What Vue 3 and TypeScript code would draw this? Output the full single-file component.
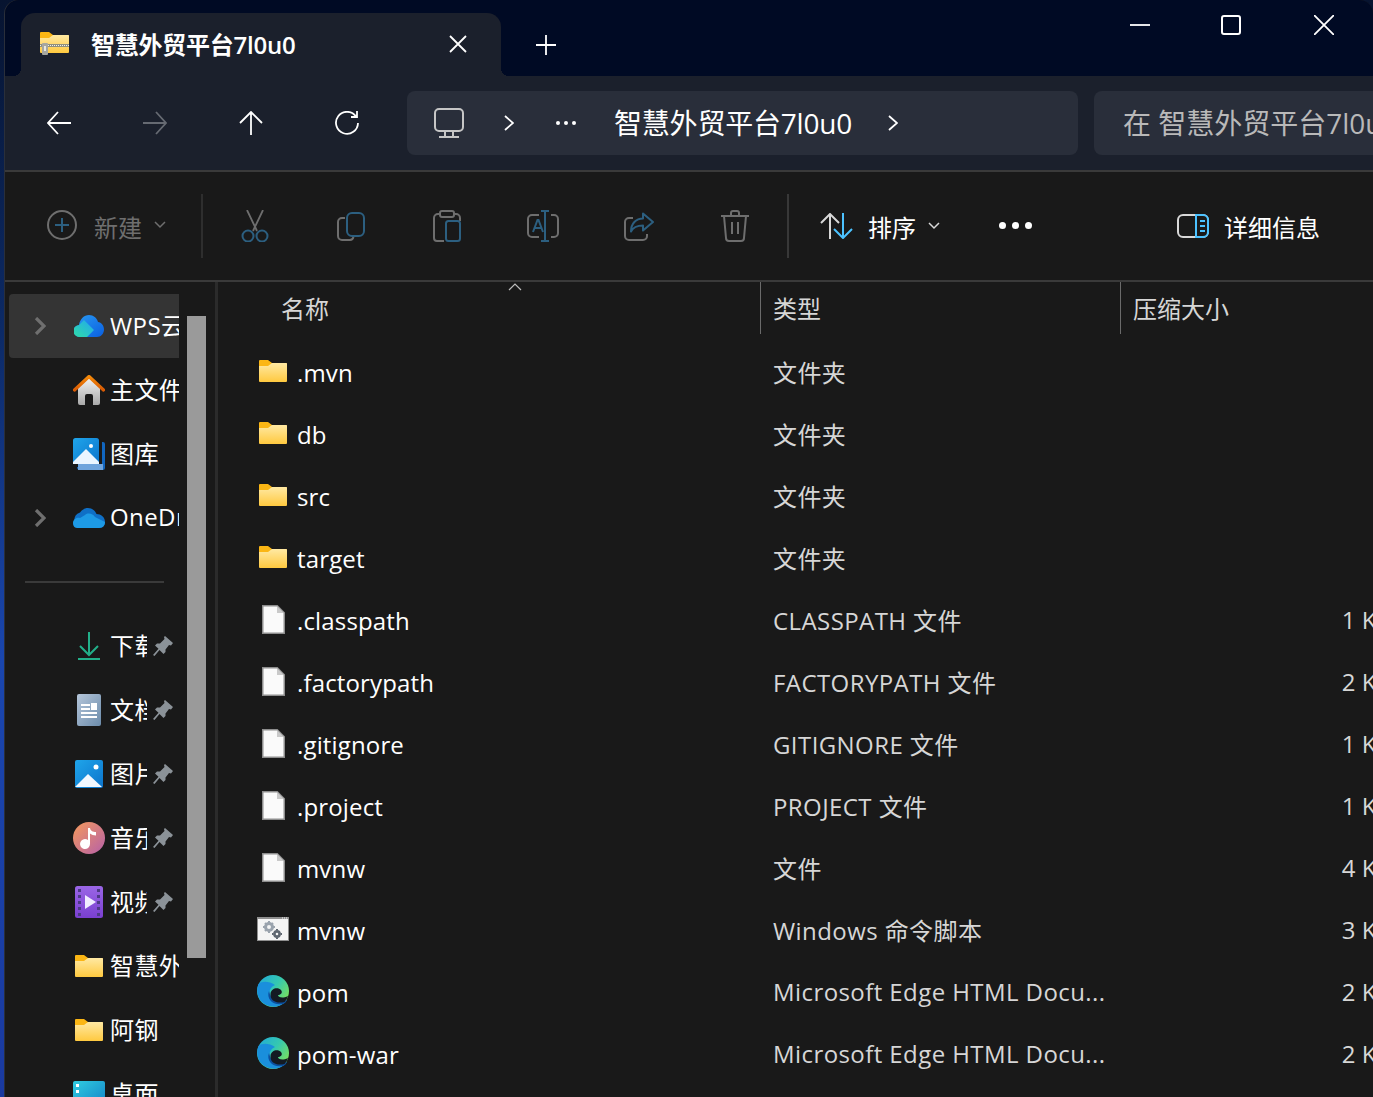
<script setup lang="ts">
interface NavItem { label: string; icon: string; w: number; h: number; chevron?: boolean; pinned?: boolean; selected?: boolean }
interface FileRow { name: string; icon: string; w: number; h: number; type: string; size?: string }

const navTop: NavItem[] = [
  { label: 'WPS云盘', icon: 'wps', w: 30, h: 22, chevron: true, selected: true },
  { label: '主文件夹', icon: 'home', w: 32, h: 30 },
  { label: '图库', icon: 'gallery', w: 32, h: 32 },
  { label: 'OneDrive', icon: 'onedrive', w: 32, h: 20, chevron: true },
]
const navBottom: NavItem[] = [
  { label: '下载', icon: 'download', w: 22, h: 28, pinned: true },
  { label: '文档', icon: 'doc', w: 24, h: 32, pinned: true },
  { label: '图片', icon: 'picture', w: 28, h: 28, pinned: true },
  { label: '音乐', icon: 'music', w: 32, h: 32, pinned: true },
  { label: '视频', icon: 'video', w: 28, h: 32, pinned: true },
  { label: '智慧外贸平台7l0u0', icon: 'folder', w: 28, h: 22 },
  { label: '阿钢', icon: 'folder', w: 28, h: 22 },
  { label: '桌面', icon: 'desktop', w: 32, h: 26 },
]
const folder = { icon: 'folder', w: 28, h: 22, type: '文件夹' }
const file = { icon: 'file', w: 23, h: 29 }
const edge = { icon: 'edge', w: 32, h: 32, type: 'Microsoft Edge HTML Docu...', size: '2 KB' }
const rows: FileRow[] = [
  { name: '.mvn', ...folder },
  { name: 'db', ...folder },
  { name: 'src', ...folder },
  { name: 'target', ...folder },
  { name: '.classpath', ...file, type: 'CLASSPATH 文件', size: '1 KB' },
  { name: '.factorypath', ...file, type: 'FACTORYPATH 文件', size: '2 KB' },
  { name: '.gitignore', ...file, type: 'GITIGNORE 文件', size: '1 KB' },
  { name: '.project', ...file, type: 'PROJECT 文件', size: '1 KB' },
  { name: 'mvnw', ...file, type: '文件', size: '4 KB' },
  { name: 'mvnw', icon: 'script', w: 32, h: 24, type: 'Windows 命令脚本', size: '3 KB' },
  { name: 'pom', ...edge },
  { name: 'pom-war', ...edge },
]
const cmdIcons = [
  { id: 'cut', w: 28, h: 32 },
  { id: 'copy', w: 28, h: 29 },
  { id: 'paste', w: 28, h: 32 },
  { id: 'rename', w: 32, h: 32 },
  { id: 'share', w: 30, h: 29 },
  { id: 'trash', w: 30, h: 32 },
]
</script>

<template>
  <div class="screen">
    <svg class="defs" width="0" height="0" aria-hidden="true">
      <defs>
        <linearGradient id="gFolder" x1="0" y1="0" x2="0" y2="1"><stop offset="0" stop-color="#ffe9a3" /><stop offset="1" stop-color="#ffc93f" /></linearGradient>
        <linearGradient id="gWpsA" x1="0" y1="1" x2="1" y2="0"><stop offset="0" stop-color="#2fdca6" /><stop offset="1" stop-color="#22a7f0" /></linearGradient>
        <linearGradient id="gWpsB" x1="0" y1="0" x2="1" y2="1"><stop offset="0" stop-color="#2a9bf2" /><stop offset="1" stop-color="#0a5fe0" /></linearGradient>
        <linearGradient id="gRoof" x1="0" y1="0" x2="0" y2="1"><stop offset="0" stop-color="#f58a0a" /><stop offset="1" stop-color="#d85a04" /></linearGradient>
        <linearGradient id="gHouse" x1="0" y1="0" x2="0" y2="1"><stop offset="0" stop-color="#f2f2f2" /><stop offset="1" stop-color="#a9a9a9" /></linearGradient>
        <linearGradient id="gBlue" x1="0" y1="0" x2="1" y2="1"><stop offset="0" stop-color="#1fa5ea" /><stop offset="1" stop-color="#0c74cc" /></linearGradient>
        <linearGradient id="gDoc" x1="0" y1="0" x2="1" y2="1"><stop offset="0" stop-color="#b5c6da" /><stop offset="1" stop-color="#6c8cab" /></linearGradient>
        <linearGradient id="gMusic" x1="0" y1="0" x2="1" y2="1"><stop offset="0" stop-color="#f59a5c" /><stop offset="1" stop-color="#b660a8" /></linearGradient>
        <linearGradient id="gVideo" x1="0" y1="0" x2="0" y2="1"><stop offset="0" stop-color="#9a66e6" /><stop offset="1" stop-color="#7a3fd0" /></linearGradient>
        <linearGradient id="gEdge" x1="0" y1="0" x2="1" y2=".7"><stop offset="0" stop-color="#1fa8dc" /><stop offset=".55" stop-color="#35c8b0" /><stop offset="1" stop-color="#7be25a" /></linearGradient>
        <linearGradient id="gDesk" x1="0" y1="0" x2="1" y2="1"><stop offset="0" stop-color="#30cde0" /><stop offset="1" stop-color="#1382c8" /></linearGradient>
        <symbol id="folder" viewBox="0 0 28 22">
          <path d="M1 0h8l4 3h14a1 1 0 0 1 1 1v4H0V1a1 1 0 0 1 1-1z" fill="#fbb614" />
          <path d="M0 6h9l4-3h14a1 1 0 0 1 1 1v17a1 1 0 0 1-1 1H1a1 1 0 0 1-1-1z" fill="url(#gFolder)" />
        </symbol>
        <symbol id="zip" viewBox="0 0 29 23">
          <path d="M1 0h8l4 3h15a1 1 0 0 1 1 1v4H0V1a1 1 0 0 1 1-1z" fill="#fbb614" />
          <path d="M0 6h9l4-3h15a1 1 0 0 1 1 1v16a1 1 0 0 1-1 1H1a1 1 0 0 1-1-1z" fill="url(#gFolder)" />
          <rect x="0" y="12" width="29" height="3" fill="#8f8f80" />
          <path d="M0 13.5h29" stroke="#f3f3e8" stroke-width="1" stroke-dasharray="1 1" />
          <rect x="2" y="11" width="6" height="12" rx="1" fill="#a7a7a0" />
          <rect x="4" y="14" width="2" height="5" fill="#e8e8e0" />
        </symbol>
        <symbol id="file" viewBox="0 0 23 29">
          <path d="M.75.75h14.5l7 7v20.5H.75z" fill="#fafafa" stroke="#8d8d8d" stroke-width="1.5" />
          <path d="M15 1v7h7z" fill="#c9c9c9" />
        </symbol>
        <symbol id="script" viewBox="0 0 32 24">
          <rect x=".5" y=".5" width="31" height="23" fill="#f4f4f4" stroke="#8f8f8f" />
          <rect x="0" y="0" width="32" height="2" fill="#8f8f8f" />
          <path d="M25 1h6" stroke="#f4f4f4" stroke-width="1" stroke-dasharray="1 1" />
          <circle cx="12" cy="10" r="3.500" fill="none" stroke="#9aa3ad" stroke-width="3" />
          <circle cx="20" cy="17" r="2.600" fill="none" stroke="#5f6670" stroke-width="2.600" />
          <path d="M12 4v2M12 14v2M6 10h2M16 10h2M8 6l1.500 1.500M16 6l-1.500 1.500M8 14l1.500-1.500" stroke="#9aa3ad" stroke-width="2" />
          <path d="M20 12v1.500M20 20.500V22M15 17h1.500M23.500 17H25" stroke="#5f6670" stroke-width="2" />
        </symbol>
        <symbol id="edge" viewBox="0 0 32 32">
          <circle cx="16" cy="16" r="16" fill="url(#gEdge)" />
          <path d="M1.500 9C-2 18 2 28 12 31c6 2 14 0 18-6-6 3-13 2-16-3-3-5-1-10 4-12C12 6 5 6 1.500 9z" fill="#1a8fdc" />
          <path d="M12 16c-3 8 4 15 14 13 2-1 3-2 4-4-6 3-13 2-16-3-1-2-1.500-4-2-6z" fill="#0c4f9e" />
          <path d="M13.500 19c.5-6 7.500-7 10.500-4 2 2.500 0 5-3 5 0 2 4 4 10 1-1 3-2 4.500-3.500 6-7.500 2-14.500-1-14-8z" fill="#141a22" />
        </symbol>
        <symbol id="wps" viewBox="0 0 30 22">
          <path d="M12 22H6a6 6 0 0 1-1-12C6 4 10 0 15 0c4.500 0 8 3 9 7 3.500.5 6 3.500 6 7.500 0 4-3 7.500-7 7.500z" fill="url(#gWpsB)" />
          <path d="M6 22a6 6 0 0 1-1-12l5-5 10 10-7 7z" fill="url(#gWpsA)" />
        </symbol>
        <symbol id="home" viewBox="0 0 32 30">
          <path d="M5 13 16 3l11 10v15a2 2 0 0 1-2 2h-5v-9a2 2 0 0 0-2-2h-4a2 2 0 0 0-2 2v9H7a2 2 0 0 1-2-2z" fill="url(#gHouse)" />
          <path d="M1.500 15 16 1.500 30.500 15" fill="none" stroke="url(#gRoof)" stroke-width="3.200" stroke-linecap="round" stroke-linejoin="round" />
        </symbol>
        <symbol id="gallery" viewBox="0 0 32 32">
          <path d="M29 4h1a2 2 0 0 1 2 2v24a2 2 0 0 1-2 2H7a3 3 0 0 1-3-3h25z" fill="#1166c0" />
          <rect x="5" y="26" width="25" height="6" fill="#6fa4dc" />
          <rect x="0" y="0" width="26" height="26" rx="2.500" fill="url(#gBlue)" />
          <circle cx="18" cy="8" r="2" fill="#fff" />
          <path d="M0 24 13 11l13 13v2H0z" fill="#eaf5ff" />
        </symbol>
        <symbol id="onedrive" viewBox="0 0 32 20">
          <path d="M8 20a8 8 0 0 1-1-15.500C9 1.500 12 0 15 0c4 0 7 2.500 8.500 6 4.500 0 8.500 3 8.500 8 0 3-2 6-6 6z" fill="#0f6fc6" />
          <path d="M12 7C15 4.500 20 5.500 22 9l10 5c0 3-2 6-6 6H4C1 20 0 17 0 15c0-3 3-6 7-5z" fill="#1d9ae6" />
        </symbol>
        <symbol id="download" viewBox="0 0 22 28">
          <path d="M11 0v22M2 14l9 9 9-9M0 27h22" fill="none" stroke="#22b08a" stroke-width="2" />
        </symbol>
        <symbol id="doc" viewBox="0 0 24 32">
          <rect width="24" height="32" rx="2" fill="url(#gDoc)" />
          <path d="M4 11h9M4 15h9M4 19h16M4 23h16" stroke="#fff" stroke-width="2" />
          <rect x="14" y="9" width="6" height="7" fill="#fff" />
        </symbol>
        <symbol id="picture" viewBox="0 0 28 28">
          <rect width="28" height="28" rx="2" fill="url(#gBlue)" />
          <circle cx="21" cy="7" r="2.500" fill="#fff" />
          <path d="M0 27 13 14l14 13z" fill="#f2f8ff" />
        </symbol>
        <symbol id="music" viewBox="0 0 32 32">
          <circle cx="16" cy="16" r="16" fill="url(#gMusic)" />
          <path d="M15 6h2c.5 3 3 4 6 4v3.500c-2.500 0-4.500-.8-6-2V22a5 5 0 1 1-2-4z" fill="#fff" />
        </symbol>
        <symbol id="video" viewBox="0 0 28 32">
          <rect width="28" height="32" rx="2.500" fill="url(#gVideo)" />
          <path d="M3 3h3v3H3zM3 9h3v3H3zM3 15h3v3H3zM3 21h3v3H3zM3 27h3v3H3zM22 3h3v3h-3zM22 9h3v3h-3zM22 15h3v3h-3zM22 21h3v3h-3zM22 27h3v3h-3z" fill="#4d3a86" />
          <path d="M10 9v14l11-7z" fill="#f0ecff" />
        </symbol>
        <symbol id="desktop" viewBox="0 0 32 26">
          <rect width="32" height="26" rx="2" fill="url(#gDesk)" />
          <rect x="3" y="3" width="3" height="3" fill="#fff" />
          <rect x="3" y="9" width="3" height="3" fill="#fff" />
        </symbol>
        <symbol id="pin" viewBox="0 0 20 20">
          <path d="M12 0l8 7-2 2.500-2-.5-3.500 4.500V16l-2 2-4-4-5 6L0 19l5.500-6.200L2 9.500l2-2h3L11.500 3 11 1z" fill="#8b9298" />
        </symbol>
        <symbol id="cut" viewBox="0 0 28 32">
          <path d="M6 0l10 21M22 0 12 21" fill="none" stroke="#6e6e6e" stroke-width="1.800" />
          <circle cx="7" cy="26" r="5.500" fill="none" stroke="#2c5f80" stroke-width="2" />
          <circle cx="21" cy="26" r="5.500" fill="none" stroke="#2c5f80" stroke-width="2" />
        </symbol>
        <symbol id="copy" viewBox="0 0 28 29">
          <path d="M8 6H5a4 4 0 0 0-4 4v14a4 4 0 0 0 4 4h8a4 4 0 0 0 3.500-3" fill="none" stroke="#6e6e6e" stroke-width="2" />
          <rect x="10" y="1" width="17" height="23" rx="5" fill="none" stroke="#2c5f80" stroke-width="2" />
        </symbol>
        <symbol id="paste" viewBox="0 0 28 32">
          <path d="M7 4H5a4 4 0 0 0-4 4v20a3 3 0 0 0 3 3h7M21 4h2a4 4 0 0 1 4 4v3" fill="none" stroke="#6e6e6e" stroke-width="2" />
          <rect x="7" y="1" width="14" height="6" rx="2" fill="none" stroke="#6e6e6e" stroke-width="2" />
          <rect x="13" y="11" width="14" height="20" rx="2.500" fill="none" stroke="#2c5f80" stroke-width="2" />
        </symbol>
        <symbol id="rename" viewBox="0 0 32 32">
          <path d="M12 5H5a4 4 0 0 0-4 4v14a4 4 0 0 0 4 4h7M24 5h3a4 4 0 0 1 4 4v14a4 4 0 0 1-4 4h-3" fill="none" stroke="#6e6e6e" stroke-width="2" />
          <path d="M18 1v30M14 1h8M14 31h8M6 22l4.500-12h1l4.500 12M7.500 18h7" fill="none" stroke="#2c5f80" stroke-width="2" />
        </symbol>
        <symbol id="share" viewBox="0 0 30 29">
          <path d="M9 6H5a4 4 0 0 0-4 4v14a4 4 0 0 0 4 4h14a4 4 0 0 0 4-4v-2" fill="none" stroke="#6e6e6e" stroke-width="2" />
          <path d="M19 1.500 29 10 19 18.500v-5c-6 0-10 2-12 6 0-8 5-13 12-13z" fill="none" stroke="#2c5f80" stroke-width="2" stroke-linejoin="round" />
        </symbol>
        <symbol id="trash" viewBox="0 0 30 32">
          <path d="M1 6h28M11 5V3a2 2 0 0 1 2-2h4a2 2 0 0 1 2 2v2M4 6l2 22a3 3 0 0 0 3 3h12a3 3 0 0 0 3-3l2-22M12 12v12M18 12v12" fill="none" stroke="#6e6e6e" stroke-width="2" />
        </symbol>
      </defs>
    </svg>

    <div class="window">
      <header class="titlebar">
        <div class="tab">
          <svg class="tab-icon" width="29" height="23"><use href="#zip" /></svg>
          <span class="tab-title">智慧外贸平台7l0u0</span>
          <svg class="tab-close" width="20" height="20" viewBox="0 0 20 20"><path d="M2 2l16 16M18 2 2 18" stroke="#fff" stroke-width="1.800" /></svg>
        </div>
        <svg class="tab-add" width="20" height="20" viewBox="0 0 20 20"><path d="M10 0v20M0 10h20" stroke="#fff" stroke-width="1.800" /></svg>
        <div class="win-controls">
          <svg class="win-min" width="20" height="20" viewBox="0 0 20 20"><path d="M0 10h20" stroke="#fff" stroke-width="1.800" /></svg>
          <svg width="20" height="20" viewBox="0 0 20 20"><rect x="1" y="1" width="18" height="18" rx="2" fill="none" stroke="#fff" stroke-width="2" /></svg>
          <svg width="20" height="20" viewBox="0 0 20 20"><path d="M0 0l20 20M20 0 0 20" stroke="#fff" stroke-width="1.800" /></svg>
        </div>
      </header>

      <div class="navbar">
        <div class="nav-buttons">
          <svg width="24" height="24" viewBox="0 0 24 24"><path d="M24 12H1M11 1 1 12l10 11" fill="none" stroke="#fff" stroke-width="1.800" /></svg>
          <svg width="24" height="24" viewBox="0 0 24 24"><path d="M0 12h23M13 1l10 11-10 11" fill="none" stroke="#666a72" stroke-width="1.800" /></svg>
          <svg width="24" height="24" viewBox="0 0 24 24"><path d="M12 24V1M1 12 12 1l11 11" fill="none" stroke="#fff" stroke-width="1.800" /></svg>
          <svg width="24" height="24" viewBox="0 0 24 24"><path d="M21 5.500A11 11 0 1 0 23 12M22 0v6h-6" fill="none" stroke="#fff" stroke-width="1.800" /></svg>
        </div>
        <div class="address">
          <svg width="30" height="30" viewBox="0 0 30 30"><rect x="1" y="1" width="28" height="22" rx="4" fill="none" stroke="#c6c6c6" stroke-width="2" /><path d="M11 24v4M19 24v4M5 29h20" stroke="#c6c6c6" stroke-width="2" /></svg>
          <svg class="crumb-chev first" width="10" height="16" viewBox="0 0 10 16"><path d="M1 1l8 7-8 7" fill="none" stroke="#fff" stroke-width="1.800" /></svg>
          <span class="crumb-dots"><i></i><i></i><i></i></span>
          <span class="crumb-text">智慧外贸平台7l0u0</span>
          <svg class="crumb-chev last" width="10" height="16" viewBox="0 0 10 16"><path d="M1 1l8 7-8 7" fill="none" stroke="#fff" stroke-width="1.800" /></svg>
        </div>
        <div class="search"><span>在 智慧外贸平台7l0u0</span></div>
      </div>

      <div class="toolbar">
        <div class="tool-new">
          <svg width="30" height="30" viewBox="0 0 30 30"><circle cx="15" cy="15" r="14" fill="none" stroke="#6e6e6e" stroke-width="2" /><path d="M15 8v14M8 15h14" stroke="#2c5f80" stroke-width="2" /></svg>
          <span>新建</span>
          <svg width="12" height="8" viewBox="0 0 12 8"><path d="M1 1l5 5 5-5" fill="none" stroke="#6e6e6e" stroke-width="1.500" /></svg>
        </div>
        <i class="tool-sep"></i>
        <div class="tool-cmds">
          <span v-for="c in cmdIcons" :key="c.id" class="cmd"><svg :width="c.w" :height="c.h"><use :href="'#' + c.id" /></svg></span>
        </div>
        <i class="tool-sep second"></i>
        <div class="tool-sort">
          <svg width="33" height="26" viewBox="0 0 33 26"><path d="M10 26V1M1 10l9-9 9 9" fill="none" stroke="#d8d8d8" stroke-width="2" /><path d="M23 0v25M14 16l9 9 9-9" fill="none" stroke="#4cc2ff" stroke-width="2" /></svg>
          <span>排序</span>
          <svg width="12" height="8" viewBox="0 0 12 8"><path d="M1 1l5 5 5-5" fill="none" stroke="#d8d8d8" stroke-width="1.500" /></svg>
        </div>
        <span class="tool-more"><i></i><i></i><i></i></span>
        <div class="tool-details">
          <svg width="32" height="24" viewBox="0 0 32 24"><rect x="1" y="1" width="30" height="22" rx="5" fill="none" stroke="#d8d8d8" stroke-width="2" /><path d="M19 1h7a5 5 0 0 1 5 5v12a5 5 0 0 1-5 5h-7z" fill="#191919" stroke="#4cc2ff" stroke-width="2" /><path d="M23 7h5M23 12h5M23 17h5" stroke="#4cc2ff" stroke-width="2" /></svg>
          <span>详细信息</span>
        </div>
      </div>

      <div class="body">
        <aside class="sidebar">
          <div class="nav-col">
            <ul class="nav-list">
              <li v-for="n in navTop" :key="n.label" class="nav-item" :class="{ selected: n.selected }">
                <svg v-if="n.chevron" class="nav-chev" width="12" height="18" viewBox="0 0 12 18"><path d="M2 1l8 8-8 8" fill="none" stroke="#6f6f6f" stroke-width="3.200" /></svg>
                <span class="nav-icon"><svg :width="n.w" :height="n.h"><use :href="'#' + n.icon" /></svg></span>
                <span class="nav-label">{{ n.label }}</span>
              </li>
            </ul>
            <hr class="nav-rule" />
            <ul class="nav-list">
              <li v-for="n in navBottom" :key="n.label" class="nav-item">
                <span class="nav-icon"><svg :width="n.w" :height="n.h"><use :href="'#' + n.icon" /></svg></span>
                <span class="nav-label" :class="{ short: n.pinned }">{{ n.label }}</span>
                <svg v-if="n.pinned" class="nav-pin" width="20" height="20"><use href="#pin" /></svg>
              </li>
            </ul>
          </div>
          <div class="scroll-track"><div class="scroll-thumb"></div></div>
        </aside>

        <main class="files">
          <div class="file-head">
            <div class="col-name"><span>名称</span><svg class="sort-caret" width="14" height="8" viewBox="0 0 14 8"><path d="M1 7l6-6 6 6" fill="none" stroke="#bdbdbd" stroke-width="1.200" /></svg></div>
            <div class="col-type"><span>类型</span></div>
            <div class="col-size"><span>压缩大小</span></div>
          </div>
          <div v-for="(r, i) in rows" :key="i" class="file-row">
            <div class="cell-name">
              <span class="file-icon"><svg :width="r.w" :height="r.h"><use :href="'#' + r.icon" /></svg></span>
              <span class="file-label">{{ r.name }}</span>
            </div>
            <div class="cell-type">{{ r.type }}</div>
            <div class="cell-size">{{ r.size }}</div>
          </div>
        </main>
      </div>
    </div>
  </div>
</template>

<style>
html, body { margin: 0; background: #0d2c78; }
</style>

<style scoped>
.screen {
  width: 1373px; height: 1097px; overflow: hidden; position: relative;
  background: linear-gradient(180deg, #071430 0%, #0c2a66 30%, #1a46ae 60%, #1a3aa0 100%);
  font-family: "Open Sans", "Noto Sans CJK SC", sans-serif;
  font-size: 24px; color: #fff;
}
.defs { position: absolute; }
.window {
  margin-left: 5px; width: 1368px; height: 1097px;
  border-radius: 14px 14px 0 0; overflow: hidden;
  display: flex; flex-direction: column; background: #191919;
  box-shadow: -1px 0 0 #2a2f3a;
}
.titlebar {
  height: 76px; flex: none; background: #000a24;
  display: flex; align-items: flex-end; padding-left: 16px; box-sizing: border-box;
}
.tab {
  width: 480px; height: 63px; background: #1b202c; border-radius: 14px 14px 0 0;
  display: flex; align-items: center; position: relative; padding-left: 19px; box-sizing: border-box;
}
.tab::before, .tab::after {
  content: ""; position: absolute; bottom: 0; width: 8px; height: 8px;
}
.tab::before { left: -8px; background: radial-gradient(circle at 0 0, #000a24 8px, #1b202c 8px); }
.tab::after { right: -8px; background: radial-gradient(circle at 100% 0, #000a24 8px, #1b202c 8px); }
.tab-icon { flex: none; margin-top: -3px; }
.tab-title { margin-left: 22px; font-weight: 600; width: 357px; margin-top: -2px; letter-spacing: -.25px; white-space: nowrap; }
.tab-close { flex: none; margin-top: -2px; }
.tab-add { margin-left: 35px; margin-bottom: 21px; flex: none; }
.win-controls { margin-left: auto; align-self: flex-start; margin-top: 15px; display: flex; gap: 73px; padding-right: 39px; }
.win-min { margin-right: -2px; }
.navbar {
  height: 94px; flex: none; background: #1b202c; display: flex; align-items: center;
  box-sizing: border-box; padding: 0 0 0 42px;
}
.nav-buttons { display: flex; gap: 72px; width: 312px; margin-right: 48px; flex: none; }
.address {
  width: 671px; height: 64px; background: #292e3a; border-radius: 8px; flex: none;
  display: flex; align-items: center; padding-left: 27px; box-sizing: border-box;
  font-size: 28px; margin-right: 16px;
}
.crumb-chev.first { margin-left: 40px; }
.crumb-dots { display: flex; gap: 4px; margin-left: 42px; width: 22px; }
.crumb-dots i, .tool-more i { display: block; border-radius: 50%; background: #fff; }
.crumb-dots i { width: 4px; height: 4px; }
.crumb-text { margin-left: 36px; letter-spacing: -.2px; padding-bottom: 2px; }
.crumb-chev.last { margin-left: 36px; }
.search {
  width: 320px; height: 64px; background: #292e3a; border-radius: 8px; flex: none;
  display: flex; align-items: center; padding-left: 29px; box-sizing: border-box;
  font-size: 28px; color: #b9b9b9; white-space: nowrap; overflow: hidden;
}
.search span { padding-bottom: 2px; }
.toolbar {
  height: 112px; flex: none; box-sizing: border-box; background: #191919;
  border-top: 2px solid #3a3a3a; border-bottom: 2px solid #3a3a3a;
  display: flex; align-items: center; padding-left: 42px;
}
.tool-new { display: flex; align-items: center; color: #6e6e6e; width: 155px; margin-top: -2px; }
.tool-new span { margin-left: 17px; margin-right: 12px; margin-top: 3px; }
.tool-sep { display: block; width: 2px; height: 64px; background: #2e2e2e; flex: none; margin-left: -1px; }
.tool-sep.second { margin-left: 0; background: #383838; }
.tool-cmds { display: flex; width: 584px; padding-left: 36px; box-sizing: border-box; gap: 64px; }
.cmd { display: flex; justify-content: center; align-items: center; width: 32px; height: 32px; flex: none; }
.tool-sort { display: flex; align-items: center; margin-left: 31px; width: 179px; }
.tool-sort span { margin-left: 15px; margin-right: 12px; }
.tool-more { display: flex; gap: 6px; width: 146px; margin-top: -2px; }
.tool-more i { width: 7px; height: 7px; }
.tool-details { display: flex; align-items: center; margin-left: 32px; }
.tool-details span { margin-left: 15px; }
.body { flex: 1; display: flex; min-height: 0; }
.sidebar {
  width: 213px; box-sizing: border-box; flex: none; border-right: 3px solid #2b2b2b; display: flex; overflow: hidden;
}
.nav-col { width: 174px; padding: 12px 0 0 4px; flex: none; }
.nav-list { list-style: none; margin: 0; padding: 0; }
.nav-item {
  height: 64px; display: flex; align-items: center; position: relative; white-space: nowrap;
  width: 170px; padding-left: 64px; box-sizing: border-box; border-radius: 4px 0 0 4px;
}
.nav-item.selected { background: #343434; }
.nav-chev { position: absolute; left: 25px; top: 23px; }
.nav-icon { width: 32px; display: flex; justify-content: center; align-items: center; flex: none; }
.nav-label { margin-left: 5px; overflow: hidden; flex: 1; min-width: 0; padding-bottom: 3px; letter-spacing: .4px; }
.nav-label.short { flex: none; width: 37px; }
.nav-pin { margin-left: 6px; flex: none; }
.nav-rule { border: 0; height: 2px; background: #3a3a3a; margin: 31px 0 31px 16px; width: 139px; }
.scroll-track { flex: none; margin-left: 4px; padding-top: 34px; }
.scroll-thumb { width: 19px; height: 642px; background: #9a9a9a; }
.files { flex: 1; min-width: 0; }
.file-head { display: flex; height: 52px; color: #d6d6d6; margin-bottom: 6px; }
.file-head span { padding-bottom: 2px; }
.col-name { width: 542px; padding-left: 63px; box-sizing: border-box; display: flex; align-items: center; position: relative; }
.sort-caret { position: absolute; left: 290px; top: 1px; }
.col-type, .col-size { border-left: 1px solid #6a6a6a; padding-left: 12px; display: flex; align-items: center; box-sizing: border-box; }
.col-type { width: 360px; }
.col-size { flex: 1; }
.file-row { height: 62px; display: flex; align-items: center; white-space: nowrap; }
.cell-name { width: 555px; display: flex; align-items: center; padding-left: 39px; box-sizing: border-box; flex: none; }
.file-icon { width: 32px; display: flex; justify-content: center; margin-right: 8px; flex: none; }
.file-label { padding-top: 2px; letter-spacing: .15px; }
.cell-type { width: 360px; flex: none; color: #d6d6d6; letter-spacing: .42px; }
.cell-size { width: 259px; text-align: right; flex: none; color: #d6d6d6; }
</style>
